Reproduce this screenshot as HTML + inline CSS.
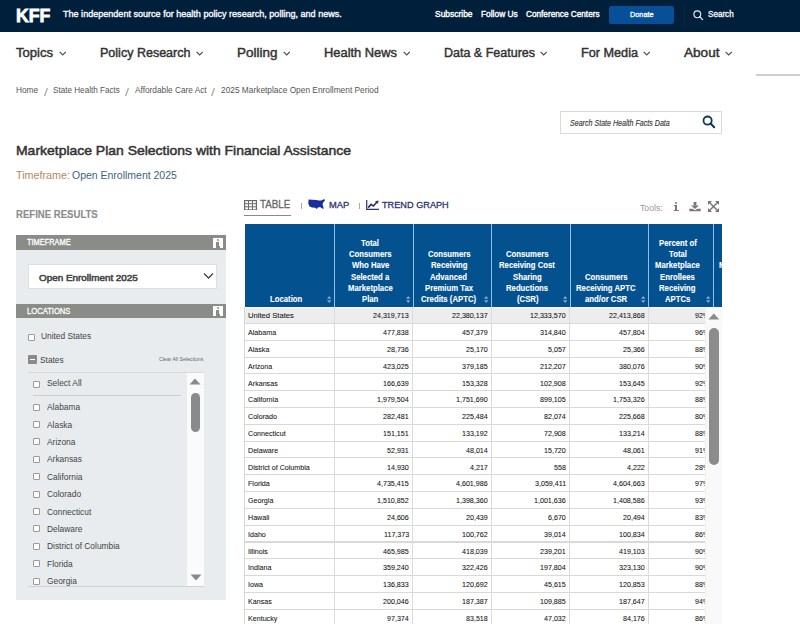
<!DOCTYPE html>
<html><head><meta charset="utf-8"><style>
html,body{margin:0;padding:0;width:800px;height:624px;overflow:hidden;background:#fff;font-family:"Liberation Sans",sans-serif;}
body{position:relative;}
</style></head><body>
<div style="position:absolute;left:0.00px;top:0.00px;width:800.00px;height:31.60px;background:#001f3a;"></div>
<div style="position:absolute;left:609.00px;top:6.00px;width:65.40px;height:18.00px;background:#074f96;border-radius:2.5px"></div>
<div style="position:absolute;left:684.00px;top:4.00px;width:1.00px;height:22.00px;background:#14263c;"></div>
<svg style="position:absolute;left:693.3px;top:9.6px" width="11" height="11" viewBox="0 0 11 11"><circle cx="4.3" cy="4.3" r="3.4" fill="none" stroke="#e6ecf4" stroke-width="1.15"/><line x1="6.8" y1="6.8" x2="9.6" y2="9.6" stroke="#e6ecf4" stroke-width="1.3" stroke-linecap="round"/></svg>
<svg style="position:absolute;left:59.2px;top:51.4px" width="7.4" height="5" viewBox="0 0 7.4 5"><polyline points="0.6,0.8 3.7,3.9 6.8,0.8" fill="none" stroke="#4a4a4a" stroke-width="1.15"/></svg>
<svg style="position:absolute;left:196.2px;top:51.4px" width="7.4" height="5" viewBox="0 0 7.4 5"><polyline points="0.6,0.8 3.7,3.9 6.8,0.8" fill="none" stroke="#4a4a4a" stroke-width="1.15"/></svg>
<svg style="position:absolute;left:282.9px;top:51.4px" width="7.4" height="5" viewBox="0 0 7.4 5"><polyline points="0.6,0.8 3.7,3.9 6.8,0.8" fill="none" stroke="#4a4a4a" stroke-width="1.15"/></svg>
<svg style="position:absolute;left:402.9px;top:51.4px" width="7.4" height="5" viewBox="0 0 7.4 5"><polyline points="0.6,0.8 3.7,3.9 6.8,0.8" fill="none" stroke="#4a4a4a" stroke-width="1.15"/></svg>
<svg style="position:absolute;left:540.2px;top:51.4px" width="7.4" height="5" viewBox="0 0 7.4 5"><polyline points="0.6,0.8 3.7,3.9 6.8,0.8" fill="none" stroke="#4a4a4a" stroke-width="1.15"/></svg>
<svg style="position:absolute;left:643.4px;top:51.4px" width="7.4" height="5" viewBox="0 0 7.4 5"><polyline points="0.6,0.8 3.7,3.9 6.8,0.8" fill="none" stroke="#4a4a4a" stroke-width="1.15"/></svg>
<svg style="position:absolute;left:725.0px;top:51.4px" width="7.4" height="5" viewBox="0 0 7.4 5"><polyline points="0.6,0.8 3.7,3.9 6.8,0.8" fill="none" stroke="#4a4a4a" stroke-width="1.15"/></svg>
<div style="position:absolute;left:756.00px;top:74.00px;width:44.00px;height:2.00px;background:#cfcfcf;"></div>
<div style="position:absolute;left:559.70px;top:111.20px;width:162.30px;height:22.40px;background:#fff;box-sizing:border-box;border:1px solid #d9dcdf"></div>
<svg style="position:absolute;left:702px;top:115px" width="14" height="14" viewBox="0 0 14 14"><circle cx="5.6" cy="5.6" r="4.1" fill="none" stroke="#0f3a4f" stroke-width="1.8"/><line x1="8.6" y1="8.6" x2="12.2" y2="12.2" stroke="#0f3a4f" stroke-width="2.1" stroke-linecap="round"/></svg>
<div style="position:absolute;left:16.30px;top:235.00px;width:209.30px;height:15.00px;background:#898c87;"></div>
<div style="position:absolute;left:16.30px;top:250.00px;width:209.30px;height:53.50px;background:#e9ecef;"></div>
<div style="position:absolute;left:28.30px;top:264.00px;width:189.00px;height:24.50px;background:#fff;box-sizing:border-box;border:1px solid #dde0e3"></div>
<svg style="position:absolute;left:203px;top:272px" width="11" height="8" viewBox="0 0 11 8"><polyline points="1,1.5 5.5,6 10,1.5" fill="none" stroke="#444" stroke-width="1.3"/></svg>
<div style="position:absolute;left:16.30px;top:303.50px;width:209.30px;height:14.50px;background:#898c87;"></div>
<div style="position:absolute;left:16.30px;top:318.00px;width:209.30px;height:282.00px;background:#e9ecef;"></div>
<div style="position:absolute;left:27.9px;top:333.6px;width:7px;height:7px;box-sizing:border-box;border:1px solid #9a9a9a;background:#fff;border-radius:1px"></div>
<div style="position:absolute;left:27.90px;top:355.00px;width:9.10px;height:9.00px;background:#8a8a8a;border-radius:1px"></div>
<div style="position:absolute;left:29.50px;top:358.80px;width:5.90px;height:1.60px;background:#fff;"></div>
<div style="position:absolute;left:27.90px;top:372.00px;width:176.10px;height:214.50px;background:#e9ecef;box-sizing:border-box;border-top:1px solid #d5d9dc;border-bottom:1.5px solid #cfd3d6"></div>
<div style="position:absolute;left:186.50px;top:373.00px;width:17.50px;height:212.50px;background:#fafbfb;"></div>
<svg style="position:absolute;left:189px;top:378px" width="12" height="7" viewBox="0 0 12 7"><polygon points="0.5,6.5 6,0.5 11.5,6.5" fill="#8a8a8a"/></svg>
<svg style="position:absolute;left:189.5px;top:574px" width="12" height="7" viewBox="0 0 12 7"><polygon points="0.5,0.5 6,6.5 11.5,0.5" fill="#8a8a8a"/></svg>
<div style="position:absolute;left:190.50px;top:392.80px;width:9.30px;height:39.70px;background:#8a8a8a;border-radius:5px"></div>
<div style="position:absolute;left:33.4px;top:380.6px;width:7px;height:7px;box-sizing:border-box;border:1px solid #9a9a9a;background:#fff;border-radius:1px"></div>
<div style="position:absolute;left:32.50px;top:395.00px;width:148.00px;height:1.00px;background:#c9cdd0;"></div>
<div style="position:absolute;left:33.4px;top:403.5px;width:7px;height:7px;box-sizing:border-box;border:1px solid #9a9a9a;background:#fff;border-radius:1px"></div>
<div style="position:absolute;left:33.4px;top:420.9px;width:7px;height:7px;box-sizing:border-box;border:1px solid #9a9a9a;background:#fff;border-radius:1px"></div>
<div style="position:absolute;left:33.4px;top:438.3px;width:7px;height:7px;box-sizing:border-box;border:1px solid #9a9a9a;background:#fff;border-radius:1px"></div>
<div style="position:absolute;left:33.4px;top:455.7px;width:7px;height:7px;box-sizing:border-box;border:1px solid #9a9a9a;background:#fff;border-radius:1px"></div>
<div style="position:absolute;left:33.4px;top:473.1px;width:7px;height:7px;box-sizing:border-box;border:1px solid #9a9a9a;background:#fff;border-radius:1px"></div>
<div style="position:absolute;left:33.4px;top:490.5px;width:7px;height:7px;box-sizing:border-box;border:1px solid #9a9a9a;background:#fff;border-radius:1px"></div>
<div style="position:absolute;left:33.4px;top:507.9px;width:7px;height:7px;box-sizing:border-box;border:1px solid #9a9a9a;background:#fff;border-radius:1px"></div>
<div style="position:absolute;left:33.4px;top:525.3px;width:7px;height:7px;box-sizing:border-box;border:1px solid #9a9a9a;background:#fff;border-radius:1px"></div>
<div style="position:absolute;left:33.4px;top:542.7px;width:7px;height:7px;box-sizing:border-box;border:1px solid #9a9a9a;background:#fff;border-radius:1px"></div>
<div style="position:absolute;left:33.4px;top:560.1px;width:7px;height:7px;box-sizing:border-box;border:1px solid #9a9a9a;background:#fff;border-radius:1px"></div>
<div style="position:absolute;left:33.4px;top:577.5px;width:7px;height:7px;box-sizing:border-box;border:1px solid #9a9a9a;background:#fff;border-radius:1px"></div>
<svg style="position:absolute;left:244px;top:199.5px" width="13" height="10.5" viewBox="0 0 13 10.5"><rect x="0.6" y="0.6" width="11.8" height="9.3" fill="none" stroke="#6b6b6b" stroke-width="1.2"/><line x1="0.6" y1="3.7" x2="12.4" y2="3.7" stroke="#6b6b6b" stroke-width="1"/><line x1="0.6" y1="6.8" x2="12.4" y2="6.8" stroke="#6b6b6b" stroke-width="1"/><line x1="4.5" y1="0.6" x2="4.5" y2="9.9" stroke="#6b6b6b" stroke-width="1"/><line x1="8.5" y1="0.6" x2="8.5" y2="9.9" stroke="#6b6b6b" stroke-width="1"/></svg>
<div style="position:absolute;left:244.00px;top:215.00px;width:46.50px;height:1.30px;background:#8a8a8a;"></div>
<div style="position:absolute;left:301.20px;top:203.00px;width:0.90px;height:6.00px;background:#aaa;"></div>
<svg style="position:absolute;left:308.2px;top:199px" width="17" height="10" viewBox="0 0 17 10"><path d="M0.6,0.6 L8,1 L11,1.6 L13.2,1.6 L16.3,0 L16.9,1.4 L15,3.8 L14.6,5.6 L15.8,9.8 L14.2,9.6 L12.6,8.2 L10.2,8.3 L8.8,10 L7.2,8.8 L4.2,8.6 L1.6,7.6 L0.3,4.8 Z" fill="#1b2d9a"/></svg>
<div style="position:absolute;left:358.60px;top:203.00px;width:0.90px;height:6.00px;background:#aaa;"></div>
<svg style="position:absolute;left:366px;top:200px" width="13" height="10" viewBox="0 0 13 10"><polyline points="0.7,0 0.7,9.3 13,9.3" fill="none" stroke="#2d336e" stroke-width="1.2"/><polyline points="2.2,7.6 5,4.4 7.4,6 11,2" fill="none" stroke="#2d336e" stroke-width="1.7"/><polygon points="9,1.2 12.6,0.4 12,3.8" fill="#2d336e"/></svg>
<div style="position:absolute;left:674.8px;top:202px;width:2.6px;height:2.4px;background:#777;border-radius:1px"></div><div style="position:absolute;left:674.8px;top:205.2px;width:2.6px;height:5.6px;background:#777"></div><div style="position:absolute;left:673.6px;top:209.6px;width:5px;height:1.6px;background:#777"></div><div style="position:absolute;left:673.8px;top:205.2px;width:1.5px;height:1.2px;background:#777"></div>
<svg style="position:absolute;left:689px;top:201.5px" width="12" height="10" viewBox="0 0 12 10"><rect x="4.6" y="0" width="2.8" height="3.6" fill="#777"/><polygon points="2,3.4 10,3.4 6,7" fill="#777"/><path d="M0.3,6.8 L3.5,6.8 L6,8.2 L8.5,6.8 L11.7,6.8 L11.7,9.3 L0.3,9.3 Z" fill="#777"/></svg>
<svg style="position:absolute;left:708px;top:201px" width="11" height="11" viewBox="0 0 11 11"><g stroke="#777" stroke-width="1.4" fill="none"><line x1="1.5" y1="1.5" x2="9.5" y2="9.5"/><line x1="9.5" y1="1.5" x2="1.5" y2="9.5"/></g><g fill="#777"><polygon points="0,0 4,0 0,4"/><polygon points="11,0 7,0 11,4"/><polygon points="0,11 4,11 0,7"/><polygon points="11,11 7,11 11,7"/></g></svg>
<div style="position:absolute;left:244.50px;top:223.60px;width:477.50px;height:83.20px;background:#04518f;"></div>
<div style="position:absolute;left:334.00px;top:223.60px;width:1.10px;height:83.20px;background:#8ec1ec;"></div>
<div style="position:absolute;left:412.50px;top:223.60px;width:1.10px;height:83.20px;background:#8ec1ec;"></div>
<div style="position:absolute;left:491.10px;top:223.60px;width:1.10px;height:83.20px;background:#8ec1ec;"></div>
<div style="position:absolute;left:569.50px;top:223.60px;width:1.10px;height:83.20px;background:#8ec1ec;"></div>
<div style="position:absolute;left:648.10px;top:223.60px;width:1.10px;height:83.20px;background:#8ec1ec;"></div>
<div style="position:absolute;left:713.10px;top:223.60px;width:1.10px;height:83.20px;background:#8ec1ec;"></div>
<svg style="position:absolute;left:327.1px;top:296.2px" width="4.4" height="7" viewBox="0 0 4.4 6.6" preserveAspectRatio="none"><polygon points="0,2.7 2.2,0 4.4,2.7" fill="#86a9cc"/><polygon points="0,3.9 2.2,6.6 4.4,3.9" fill="#86a9cc"/></svg>
<svg style="position:absolute;left:405.6px;top:296.2px" width="4.4" height="7" viewBox="0 0 4.4 6.6" preserveAspectRatio="none"><polygon points="0,2.7 2.2,0 4.4,2.7" fill="#86a9cc"/><polygon points="0,3.9 2.2,6.6 4.4,3.9" fill="#86a9cc"/></svg>
<svg style="position:absolute;left:484.2px;top:296.2px" width="4.4" height="7" viewBox="0 0 4.4 6.6" preserveAspectRatio="none"><polygon points="0,2.7 2.2,0 4.4,2.7" fill="#86a9cc"/><polygon points="0,3.9 2.2,6.6 4.4,3.9" fill="#86a9cc"/></svg>
<svg style="position:absolute;left:562.6px;top:296.2px" width="4.4" height="7" viewBox="0 0 4.4 6.6" preserveAspectRatio="none"><polygon points="0,2.7 2.2,0 4.4,2.7" fill="#86a9cc"/><polygon points="0,3.9 2.2,6.6 4.4,3.9" fill="#86a9cc"/></svg>
<svg style="position:absolute;left:641.2px;top:296.2px" width="4.4" height="7" viewBox="0 0 4.4 6.6" preserveAspectRatio="none"><polygon points="0,2.7 2.2,0 4.4,2.7" fill="#86a9cc"/><polygon points="0,3.9 2.2,6.6 4.4,3.9" fill="#86a9cc"/></svg>
<svg style="position:absolute;left:706.2px;top:296.2px" width="4.4" height="7" viewBox="0 0 4.4 6.6" preserveAspectRatio="none"><polygon points="0,2.7 2.2,0 4.4,2.7" fill="#86a9cc"/><polygon points="0,3.9 2.2,6.6 4.4,3.9" fill="#86a9cc"/></svg>
<div style="position:absolute;left:722.00px;top:223.60px;width:78.00px;height:83.20px;background:#fff;z-index:5"></div>
<div style="position:absolute;left:244.50px;top:306.80px;width:460.50px;height:317.20px;background:#fff;"></div>
<div style="position:absolute;left:244.50px;top:306.80px;width:460.50px;height:16.60px;background:#ededed;"></div>
<div style="position:absolute;left:244.50px;top:306.80px;width:460.50px;height:1.40px;background:#fbfbfb;"></div>
<div style="position:absolute;left:244.50px;top:322.90px;width:460.50px;height:1.10px;background:#d9d9d9;"></div>
<div style="position:absolute;left:244.50px;top:339.71px;width:460.50px;height:1.10px;background:#d9d9d9;"></div>
<div style="position:absolute;left:244.50px;top:356.52px;width:460.50px;height:1.10px;background:#d9d9d9;"></div>
<div style="position:absolute;left:244.50px;top:373.33px;width:460.50px;height:1.10px;background:#d9d9d9;"></div>
<div style="position:absolute;left:244.50px;top:390.14px;width:460.50px;height:1.10px;background:#d9d9d9;"></div>
<div style="position:absolute;left:244.50px;top:406.95px;width:460.50px;height:1.10px;background:#d9d9d9;"></div>
<div style="position:absolute;left:244.50px;top:423.76px;width:460.50px;height:1.10px;background:#d9d9d9;"></div>
<div style="position:absolute;left:244.50px;top:440.57px;width:460.50px;height:1.10px;background:#d9d9d9;"></div>
<div style="position:absolute;left:244.50px;top:457.38px;width:460.50px;height:1.10px;background:#d9d9d9;"></div>
<div style="position:absolute;left:244.50px;top:474.19px;width:460.50px;height:1.10px;background:#d9d9d9;"></div>
<div style="position:absolute;left:244.50px;top:491.00px;width:460.50px;height:1.10px;background:#d9d9d9;"></div>
<div style="position:absolute;left:244.50px;top:507.81px;width:460.50px;height:1.10px;background:#d9d9d9;"></div>
<div style="position:absolute;left:244.50px;top:524.62px;width:460.50px;height:1.10px;background:#d9d9d9;"></div>
<div style="position:absolute;left:244.50px;top:541.43px;width:460.50px;height:1.10px;background:#d9d9d9;"></div>
<div style="position:absolute;left:244.50px;top:558.24px;width:460.50px;height:1.10px;background:#d9d9d9;"></div>
<div style="position:absolute;left:244.50px;top:575.05px;width:460.50px;height:1.10px;background:#d9d9d9;"></div>
<div style="position:absolute;left:244.50px;top:591.86px;width:460.50px;height:1.10px;background:#d9d9d9;"></div>
<div style="position:absolute;left:244.50px;top:608.67px;width:460.50px;height:1.10px;background:#d9d9d9;"></div>
<div style="position:absolute;left:244.50px;top:625.48px;width:460.50px;height:1.10px;background:#d9d9d9;"></div>
<div style="position:absolute;left:244.20px;top:306.80px;width:1.00px;height:317.20px;background:#d6d6d6;"></div>
<div style="position:absolute;left:333.50px;top:306.80px;width:1.10px;height:317.20px;background:#dcdcdc;"></div>
<div style="position:absolute;left:412.00px;top:306.80px;width:1.10px;height:317.20px;background:#dcdcdc;"></div>
<div style="position:absolute;left:490.60px;top:306.80px;width:1.10px;height:317.20px;background:#dcdcdc;"></div>
<div style="position:absolute;left:569.00px;top:306.80px;width:1.10px;height:317.20px;background:#dcdcdc;"></div>
<div style="position:absolute;left:647.60px;top:306.80px;width:1.10px;height:317.20px;background:#dcdcdc;"></div>
<div style="position:absolute;left:705.00px;top:306.80px;width:17.00px;height:317.20px;background:#f9f9f9;z-index:5"></div>
<div style="position:absolute;left:705.00px;top:306.80px;width:0.60px;height:317.20px;background:#efefef;z-index:5"></div>
<svg style="position:absolute;left:708px;top:313px;z-index:6" width="12" height="7" viewBox="0 0 12 7"><polygon points="0.3,6.6 5.8,0.4 11.3,6.6" fill="#8c8c8c"/></svg>
<div style="position:absolute;left:709.20px;top:327.60px;width:9.40px;height:137.00px;background:#8c8c8c;z-index:6;border-radius:5px"></div>
<div style="position:absolute;left:15.59px;top:15.50px;line-height:0;white-space:nowrap;font-family:'Liberation Sans';font-size:18.00px;font-weight:bold;font-style:normal;color:#fff;transform:scaleX(0.9803);transform-origin:0 0;-webkit-text-stroke:0.8px #fff;">KFF</div>
<div style="position:absolute;left:62.64px;top:14.30px;line-height:0;white-space:nowrap;font-family:'Liberation Sans';font-size:9.43px;font-weight:normal;font-style:normal;color:#f4f6fa;transform:scaleX(0.9608);transform-origin:0 0;-webkit-text-stroke:0.4px #f4f6fa;">The independent source for health policy research, polling, and news.</div>
<div style="position:absolute;left:434.86px;top:14.30px;line-height:0;white-space:nowrap;font-family:'Liberation Sans';font-size:9.43px;font-weight:normal;font-style:normal;color:#fff;transform:scaleX(0.8959);transform-origin:0 0;-webkit-text-stroke:0.4px #fff;">Subscribe</div>
<div style="position:absolute;left:480.87px;top:14.30px;line-height:0;white-space:nowrap;font-family:'Liberation Sans';font-size:9.43px;font-weight:normal;font-style:normal;color:#fff;transform:scaleX(0.8880);transform-origin:0 0;-webkit-text-stroke:0.4px #fff;">Follow Us</div>
<div style="position:absolute;left:526.07px;top:14.30px;line-height:0;white-space:nowrap;font-family:'Liberation Sans';font-size:9.43px;font-weight:normal;font-style:normal;color:#fff;transform:scaleX(0.8726);transform-origin:0 0;-webkit-text-stroke:0.4px #fff;">Conference Centers</div>
<div style="position:absolute;left:630.31px;top:14.70px;line-height:0;white-space:nowrap;font-family:'Liberation Sans';font-size:7.71px;font-weight:normal;font-style:normal;color:#eef6ff;transform:scaleX(0.9494);transform-origin:0 0;-webkit-text-stroke:0.35px #eef6ff;">Donate</div>
<div style="position:absolute;left:707.68px;top:14.40px;line-height:0;white-space:nowrap;font-family:'Liberation Sans';font-size:8.57px;font-weight:normal;font-style:normal;color:#f0f3f8;transform:scaleX(0.9450);transform-origin:0 0;-webkit-text-stroke:0.35px #f0f3f8;">Search</div>
<div style="position:absolute;left:16.48px;top:53.15px;line-height:0;white-space:nowrap;font-family:'Liberation Sans';font-size:12.71px;font-weight:normal;font-style:normal;color:#333333;transform:scaleX(1.0286);transform-origin:0 0;-webkit-text-stroke:0.45px #333333;">Topics</div>
<div style="position:absolute;left:100.00px;top:53.15px;line-height:0;white-space:nowrap;font-family:'Liberation Sans';font-size:12.71px;font-weight:normal;font-style:normal;color:#333333;transform:scaleX(0.9859);transform-origin:0 0;-webkit-text-stroke:0.45px #333333;">Policy Research</div>
<div style="position:absolute;left:236.86px;top:53.15px;line-height:0;white-space:nowrap;font-family:'Liberation Sans';font-size:12.71px;font-weight:normal;font-style:normal;color:#333333;transform:scaleX(1.0586);transform-origin:0 0;-webkit-text-stroke:0.45px #333333;">Polling</div>
<div style="position:absolute;left:324.18px;top:53.15px;line-height:0;white-space:nowrap;font-family:'Liberation Sans';font-size:12.71px;font-weight:normal;font-style:normal;color:#333333;transform:scaleX(1.0141);transform-origin:0 0;-webkit-text-stroke:0.45px #333333;">Health News</div>
<div style="position:absolute;left:443.50px;top:53.15px;line-height:0;white-space:nowrap;font-family:'Liberation Sans';font-size:12.71px;font-weight:normal;font-style:normal;color:#333333;transform:scaleX(0.9838);transform-origin:0 0;-webkit-text-stroke:0.45px #333333;">Data &amp; Features</div>
<div style="position:absolute;left:580.69px;top:53.15px;line-height:0;white-space:nowrap;font-family:'Liberation Sans';font-size:12.71px;font-weight:normal;font-style:normal;color:#333333;transform:scaleX(0.9970);transform-origin:0 0;-webkit-text-stroke:0.45px #333333;">For Media</div>
<div style="position:absolute;left:683.86px;top:53.15px;line-height:0;white-space:nowrap;font-family:'Liberation Sans';font-size:12.71px;font-weight:normal;font-style:normal;color:#333333;transform:scaleX(1.0688);transform-origin:0 0;-webkit-text-stroke:0.45px #333333;">About</div>
<div style="position:absolute;left:16.17px;top:90.30px;line-height:0;white-space:nowrap;font-family:'Liberation Sans';font-size:8.86px;font-weight:normal;font-style:normal;color:#555;transform:scaleX(0.9395);transform-origin:0 0;">Home</div>
<div style="position:absolute;left:43.63px;top:91.50px;line-height:0;white-space:nowrap;font-family:'Liberation Sans';font-size:10.57px;font-weight:normal;font-style:normal;color:#9a9a9a;transform:scaleX(1.3386);transform-origin:0 0;">/</div>
<div style="position:absolute;left:53.42px;top:90.30px;line-height:0;white-space:nowrap;font-family:'Liberation Sans';font-size:8.86px;font-weight:normal;font-style:normal;color:#555;transform:scaleX(0.9196);transform-origin:0 0;">State Health Facts</div>
<div style="position:absolute;left:125.23px;top:91.50px;line-height:0;white-space:nowrap;font-family:'Liberation Sans';font-size:10.57px;font-weight:normal;font-style:normal;color:#9a9a9a;transform:scaleX(1.3386);transform-origin:0 0;">/</div>
<div style="position:absolute;left:134.67px;top:90.30px;line-height:0;white-space:nowrap;font-family:'Liberation Sans';font-size:8.86px;font-weight:normal;font-style:normal;color:#555;transform:scaleX(0.9364);transform-origin:0 0;">Affordable Care Act</div>
<div style="position:absolute;left:211.43px;top:91.50px;line-height:0;white-space:nowrap;font-family:'Liberation Sans';font-size:10.57px;font-weight:normal;font-style:normal;color:#9a9a9a;transform:scaleX(1.3386);transform-origin:0 0;">/</div>
<div style="position:absolute;left:220.67px;top:90.30px;line-height:0;white-space:nowrap;font-family:'Liberation Sans';font-size:8.86px;font-weight:normal;font-style:normal;color:#555;transform:scaleX(0.9432);transform-origin:0 0;">2025 Marketplace Open Enrollment Period</div>
<div style="position:absolute;left:569.72px;top:122.60px;line-height:0;white-space:nowrap;font-family:'Liberation Sans';font-size:8.29px;font-weight:normal;font-style:italic;color:#3a3a3a;transform:scaleX(0.8565);transform-origin:0 0;-webkit-text-stroke:0.15px #3a3a3a;">Search State Health Facts Data</div>
<div style="position:absolute;left:15.94px;top:150.50px;line-height:0;white-space:nowrap;font-family:'Liberation Sans';font-size:13.43px;font-weight:normal;font-style:normal;color:#333;transform:scaleX(1.0394);transform-origin:0 0;-webkit-text-stroke:0.5px #333;">Marketplace Plan Selections with Financial Assistance</div>
<div style="position:absolute;left:16.07px;top:175.45px;line-height:0;white-space:nowrap;font-family:'Liberation Sans';font-size:11.00px;font-weight:normal;font-style:normal;color:#b8885c;transform:scaleX(0.9772);transform-origin:0 0;">Timeframe:</div>
<div style="position:absolute;left:71.58px;top:175.45px;line-height:0;white-space:nowrap;font-family:'Liberation Sans';font-size:11.00px;font-weight:normal;font-style:normal;color:#3a6583;transform:scaleX(0.9524);transform-origin:0 0;">Open Enrollment 2025</div>
<div style="position:absolute;left:16.12px;top:213.50px;line-height:0;white-space:nowrap;font-family:'Liberation Sans';font-size:10.57px;font-weight:bold;font-style:normal;color:#8c8c8c;transform:scaleX(0.9066);transform-origin:0 0;-webkit-text-stroke:0.15px #8c8c8c;">REFINE RESULTS</div>
<div style="position:absolute;left:27.40px;top:242.20px;line-height:0;white-space:nowrap;font-family:'Liberation Sans';font-size:8.57px;font-weight:normal;font-style:normal;color:#fff;transform:scaleX(0.8646);transform-origin:0 0;-webkit-text-stroke:0.3px #fff;">TIMEFRAME</div>
<div style="position:absolute;left:38.85px;top:277.65px;line-height:0;white-space:nowrap;font-family:'Liberation Sans';font-size:9.57px;font-weight:normal;font-style:normal;color:#444;transform:scaleX(1.0330);transform-origin:0 0;-webkit-text-stroke:0.55px #444;">Open Enrollment 2025</div>
<div style="position:absolute;left:27.40px;top:310.70px;line-height:0;white-space:nowrap;font-family:'Liberation Sans';font-size:8.57px;font-weight:normal;font-style:normal;color:#fff;transform:scaleX(0.8885);transform-origin:0 0;-webkit-text-stroke:0.3px #fff;">LOCATIONS</div>
<div style="position:absolute;left:41.27px;top:336.30px;line-height:0;white-space:nowrap;font-family:'Liberation Sans';font-size:8.86px;font-weight:normal;font-style:normal;color:#444;transform:scaleX(0.9430);transform-origin:0 0;">United States</div>
<div style="position:absolute;left:39.67px;top:360.20px;line-height:0;white-space:nowrap;font-family:'Liberation Sans';font-size:8.57px;font-weight:normal;font-style:normal;color:#444;transform:scaleX(0.9748);transform-origin:0 0;">States</div>
<div style="position:absolute;left:159.49px;top:359.40px;line-height:0;white-space:nowrap;font-family:'Liberation Sans';font-size:6.00px;font-weight:normal;font-style:normal;color:#666;transform:scaleX(0.8570);transform-origin:0 0;">Clear All Selections</div>
<div style="position:absolute;left:46.66px;top:383.20px;line-height:0;white-space:nowrap;font-family:'Liberation Sans';font-size:8.57px;font-weight:normal;font-style:normal;color:#444;transform:scaleX(0.9841);transform-origin:0 0;">Select All</div>
<div style="position:absolute;left:46.66px;top:407.20px;line-height:0;white-space:nowrap;font-family:'Liberation Sans';font-size:8.57px;font-weight:normal;font-style:normal;color:#444;transform:scaleX(0.9800);transform-origin:0 0;">Alabama</div>
<div style="position:absolute;left:46.66px;top:424.60px;line-height:0;white-space:nowrap;font-family:'Liberation Sans';font-size:8.57px;font-weight:normal;font-style:normal;color:#444;transform:scaleX(0.9800);transform-origin:0 0;">Alaska</div>
<div style="position:absolute;left:46.66px;top:442.00px;line-height:0;white-space:nowrap;font-family:'Liberation Sans';font-size:8.57px;font-weight:normal;font-style:normal;color:#444;transform:scaleX(0.9800);transform-origin:0 0;">Arizona</div>
<div style="position:absolute;left:46.66px;top:459.40px;line-height:0;white-space:nowrap;font-family:'Liberation Sans';font-size:8.57px;font-weight:normal;font-style:normal;color:#444;transform:scaleX(0.9800);transform-origin:0 0;">Arkansas</div>
<div style="position:absolute;left:46.66px;top:476.80px;line-height:0;white-space:nowrap;font-family:'Liberation Sans';font-size:8.57px;font-weight:normal;font-style:normal;color:#444;transform:scaleX(0.9800);transform-origin:0 0;">California</div>
<div style="position:absolute;left:46.66px;top:494.20px;line-height:0;white-space:nowrap;font-family:'Liberation Sans';font-size:8.57px;font-weight:normal;font-style:normal;color:#444;transform:scaleX(0.9800);transform-origin:0 0;">Colorado</div>
<div style="position:absolute;left:46.66px;top:511.60px;line-height:0;white-space:nowrap;font-family:'Liberation Sans';font-size:8.57px;font-weight:normal;font-style:normal;color:#444;transform:scaleX(0.9800);transform-origin:0 0;">Connecticut</div>
<div style="position:absolute;left:46.66px;top:529.00px;line-height:0;white-space:nowrap;font-family:'Liberation Sans';font-size:8.57px;font-weight:normal;font-style:normal;color:#444;transform:scaleX(0.9800);transform-origin:0 0;">Delaware</div>
<div style="position:absolute;left:46.66px;top:546.40px;line-height:0;white-space:nowrap;font-family:'Liberation Sans';font-size:8.57px;font-weight:normal;font-style:normal;color:#444;transform:scaleX(0.9800);transform-origin:0 0;">District of Columbia</div>
<div style="position:absolute;left:46.66px;top:563.80px;line-height:0;white-space:nowrap;font-family:'Liberation Sans';font-size:8.57px;font-weight:normal;font-style:normal;color:#444;transform:scaleX(0.9800);transform-origin:0 0;">Florida</div>
<div style="position:absolute;left:46.66px;top:581.20px;line-height:0;white-space:nowrap;font-family:'Liberation Sans';font-size:8.57px;font-weight:normal;font-style:normal;color:#444;transform:scaleX(0.9800);transform-origin:0 0;">Georgia</div>
<div style="position:absolute;left:260.11px;top:204.80px;line-height:0;white-space:nowrap;font-family:'Liberation Sans';font-size:10.00px;font-weight:normal;font-style:normal;color:#666;transform:scaleX(0.9788);transform-origin:0 0;-webkit-text-stroke:0.3px #666;">TABLE</div>
<div style="position:absolute;left:329.13px;top:204.80px;line-height:0;white-space:nowrap;font-family:'Liberation Sans';font-size:9.71px;font-weight:normal;font-style:normal;color:#2d336e;transform:scaleX(0.9628);transform-origin:0 0;-webkit-text-stroke:0.3px #2d336e;">MAP</div>
<div style="position:absolute;left:382.23px;top:204.80px;line-height:0;white-space:nowrap;font-family:'Liberation Sans';font-size:9.71px;font-weight:normal;font-style:normal;color:#2d336e;transform:scaleX(0.9449);transform-origin:0 0;-webkit-text-stroke:0.3px #2d336e;">TREND GRAPH</div>
<div style="position:absolute;left:639.65px;top:207.75px;line-height:0;white-space:nowrap;font-family:'Liberation Sans';font-size:9.29px;font-weight:normal;font-style:normal;color:#999;transform:scaleX(0.9378);transform-origin:0 0;">Tools:</div>
<div style="position:absolute;left:269.87px;top:298.82px;line-height:0;white-space:nowrap;font-family:'Liberation Sans';font-size:8.80px;font-weight:bold;font-style:normal;color:#fff;transform:scaleX(0.8800);transform-origin:0 0;-webkit-text-stroke:0.1px #fff;">Location</div>
<div style="position:absolute;left:361.29px;top:243.07px;line-height:0;white-space:nowrap;font-family:'Liberation Sans';font-size:8.80px;font-weight:bold;font-style:normal;color:#fff;transform:scaleX(0.8800);transform-origin:0 0;-webkit-text-stroke:0.1px #fff;">Total</div>
<div style="position:absolute;left:348.95px;top:254.22px;line-height:0;white-space:nowrap;font-family:'Liberation Sans';font-size:8.80px;font-weight:bold;font-style:normal;color:#fff;transform:scaleX(0.8800);transform-origin:0 0;-webkit-text-stroke:0.1px #fff;">Consumers</div>
<div style="position:absolute;left:351.54px;top:265.37px;line-height:0;white-space:nowrap;font-family:'Liberation Sans';font-size:8.80px;font-weight:bold;font-style:normal;color:#fff;transform:scaleX(0.8800);transform-origin:0 0;-webkit-text-stroke:0.1px #fff;">Who Have</div>
<div style="position:absolute;left:351.10px;top:276.52px;line-height:0;white-space:nowrap;font-family:'Liberation Sans';font-size:8.80px;font-weight:bold;font-style:normal;color:#fff;transform:scaleX(0.8800);transform-origin:0 0;-webkit-text-stroke:0.1px #fff;">Selected a</div>
<div style="position:absolute;left:347.87px;top:287.67px;line-height:0;white-space:nowrap;font-family:'Liberation Sans';font-size:8.80px;font-weight:bold;font-style:normal;color:#fff;transform:scaleX(0.8800);transform-origin:0 0;-webkit-text-stroke:0.1px #fff;">Marketplace</div>
<div style="position:absolute;left:362.08px;top:298.82px;line-height:0;white-space:nowrap;font-family:'Liberation Sans';font-size:8.80px;font-weight:bold;font-style:normal;color:#fff;transform:scaleX(0.8800);transform-origin:0 0;-webkit-text-stroke:0.1px #fff;">Plan</div>
<div style="position:absolute;left:427.50px;top:254.22px;line-height:0;white-space:nowrap;font-family:'Liberation Sans';font-size:8.80px;font-weight:bold;font-style:normal;color:#fff;transform:scaleX(0.8800);transform-origin:0 0;-webkit-text-stroke:0.1px #fff;">Consumers</div>
<div style="position:absolute;left:430.51px;top:265.37px;line-height:0;white-space:nowrap;font-family:'Liberation Sans';font-size:8.80px;font-weight:bold;font-style:normal;color:#fff;transform:scaleX(0.8800);transform-origin:0 0;-webkit-text-stroke:0.1px #fff;">Receiving</div>
<div style="position:absolute;left:430.30px;top:276.52px;line-height:0;white-space:nowrap;font-family:'Liberation Sans';font-size:8.80px;font-weight:bold;font-style:normal;color:#fff;transform:scaleX(0.8800);transform-origin:0 0;-webkit-text-stroke:0.1px #fff;">Advanced</div>
<div style="position:absolute;left:424.78px;top:287.67px;line-height:0;white-space:nowrap;font-family:'Liberation Sans';font-size:8.80px;font-weight:bold;font-style:normal;color:#fff;transform:scaleX(0.8800);transform-origin:0 0;-webkit-text-stroke:0.1px #fff;">Premium Tax</div>
<div style="position:absolute;left:421.27px;top:298.82px;line-height:0;white-space:nowrap;font-family:'Liberation Sans';font-size:8.80px;font-weight:bold;font-style:normal;color:#fff;transform:scaleX(0.8800);transform-origin:0 0;-webkit-text-stroke:0.1px #fff;">Credits (APTC)</div>
<div style="position:absolute;left:506.00px;top:254.22px;line-height:0;white-space:nowrap;font-family:'Liberation Sans';font-size:8.80px;font-weight:bold;font-style:normal;color:#fff;transform:scaleX(0.8800);transform-origin:0 0;-webkit-text-stroke:0.1px #fff;">Consumers</div>
<div style="position:absolute;left:499.33px;top:265.37px;line-height:0;white-space:nowrap;font-family:'Liberation Sans';font-size:8.80px;font-weight:bold;font-style:normal;color:#fff;transform:scaleX(0.8800);transform-origin:0 0;-webkit-text-stroke:0.1px #fff;">Receiving Cost</div>
<div style="position:absolute;left:512.89px;top:276.52px;line-height:0;white-space:nowrap;font-family:'Liberation Sans';font-size:8.80px;font-weight:bold;font-style:normal;color:#fff;transform:scaleX(0.8800);transform-origin:0 0;-webkit-text-stroke:0.1px #fff;">Sharing</div>
<div style="position:absolute;left:506.22px;top:287.67px;line-height:0;white-space:nowrap;font-family:'Liberation Sans';font-size:8.80px;font-weight:bold;font-style:normal;color:#fff;transform:scaleX(0.8800);transform-origin:0 0;-webkit-text-stroke:0.1px #fff;">Reductions</div>
<div style="position:absolute;left:516.55px;top:298.82px;line-height:0;white-space:nowrap;font-family:'Liberation Sans';font-size:8.80px;font-weight:bold;font-style:normal;color:#fff;transform:scaleX(0.8800);transform-origin:0 0;-webkit-text-stroke:0.1px #fff;">(CSR)</div>
<div style="position:absolute;left:584.50px;top:276.52px;line-height:0;white-space:nowrap;font-family:'Liberation Sans';font-size:8.80px;font-weight:bold;font-style:normal;color:#fff;transform:scaleX(0.8800);transform-origin:0 0;-webkit-text-stroke:0.1px #fff;">Consumers</div>
<div style="position:absolute;left:576.04px;top:287.67px;line-height:0;white-space:nowrap;font-family:'Liberation Sans';font-size:8.80px;font-weight:bold;font-style:normal;color:#fff;transform:scaleX(0.8800);transform-origin:0 0;-webkit-text-stroke:0.1px #fff;">Receiving APTC</div>
<div style="position:absolute;left:584.72px;top:298.82px;line-height:0;white-space:nowrap;font-family:'Liberation Sans';font-size:8.80px;font-weight:bold;font-style:normal;color:#fff;transform:scaleX(0.8800);transform-origin:0 0;-webkit-text-stroke:0.1px #fff;">and/or CSR</div>
<div style="position:absolute;left:658.67px;top:243.07px;line-height:0;white-space:nowrap;font-family:'Liberation Sans';font-size:8.80px;font-weight:bold;font-style:normal;color:#fff;transform:scaleX(0.8800);transform-origin:0 0;-webkit-text-stroke:0.1px #fff;">Percent of</div>
<div style="position:absolute;left:668.63px;top:254.22px;line-height:0;white-space:nowrap;font-family:'Liberation Sans';font-size:8.80px;font-weight:bold;font-style:normal;color:#fff;transform:scaleX(0.8800);transform-origin:0 0;-webkit-text-stroke:0.1px #fff;">Total</div>
<div style="position:absolute;left:655.22px;top:265.37px;line-height:0;white-space:nowrap;font-family:'Liberation Sans';font-size:8.80px;font-weight:bold;font-style:normal;color:#fff;transform:scaleX(0.8800);transform-origin:0 0;-webkit-text-stroke:0.1px #fff;">Marketplace</div>
<div style="position:absolute;left:660.17px;top:276.52px;line-height:0;white-space:nowrap;font-family:'Liberation Sans';font-size:8.80px;font-weight:bold;font-style:normal;color:#fff;transform:scaleX(0.8800);transform-origin:0 0;-webkit-text-stroke:0.1px #fff;">Enrollees</div>
<div style="position:absolute;left:659.31px;top:287.67px;line-height:0;white-space:nowrap;font-family:'Liberation Sans';font-size:8.80px;font-weight:bold;font-style:normal;color:#fff;transform:scaleX(0.8800);transform-origin:0 0;-webkit-text-stroke:0.1px #fff;">Receiving</div>
<div style="position:absolute;left:664.91px;top:298.82px;line-height:0;white-space:nowrap;font-family:'Liberation Sans';font-size:8.80px;font-weight:bold;font-style:normal;color:#fff;transform:scaleX(0.8800);transform-origin:0 0;-webkit-text-stroke:0.1px #fff;">APTCs</div>
<div style="position:absolute;left:719.29px;top:264.72px;line-height:0;white-space:nowrap;font-family:'Liberation Sans';font-size:8.80px;font-weight:bold;font-style:normal;color:#fff;transform:scaleX(0.8800);transform-origin:0 0;-webkit-text-stroke:0.1px #fff;">M</div>
<div style="position:absolute;left:247.69px;top:316.27px;line-height:0;white-space:nowrap;font-family:'Liberation Sans';font-size:7.50px;font-weight:normal;font-style:normal;color:#111;transform:scaleX(1.0200);transform-origin:0 0;-webkit-text-stroke:0.06px #111;">United States</div>
<div style="position:absolute;left:373.42px;top:316.27px;line-height:0;white-space:nowrap;font-family:'Liberation Sans';font-size:7.50px;font-weight:normal;font-style:normal;color:#111;transform:scaleX(0.9500);transform-origin:0 0;-webkit-text-stroke:0.06px #111;">24,319,713</div>
<div style="position:absolute;left:452.02px;top:316.27px;line-height:0;white-space:nowrap;font-family:'Liberation Sans';font-size:7.50px;font-weight:normal;font-style:normal;color:#111;transform:scaleX(0.9500);transform-origin:0 0;-webkit-text-stroke:0.06px #111;">22,380,137</div>
<div style="position:absolute;left:530.42px;top:316.27px;line-height:0;white-space:nowrap;font-family:'Liberation Sans';font-size:7.50px;font-weight:normal;font-style:normal;color:#111;transform:scaleX(0.9500);transform-origin:0 0;-webkit-text-stroke:0.06px #111;">12,333,570</div>
<div style="position:absolute;left:609.02px;top:316.27px;line-height:0;white-space:nowrap;font-family:'Liberation Sans';font-size:7.50px;font-weight:normal;font-style:normal;color:#111;transform:scaleX(0.9500);transform-origin:0 0;-webkit-text-stroke:0.06px #111;">22,413,868</div>
<div style="position:absolute;left:695.42px;top:316.27px;line-height:0;white-space:nowrap;font-family:'Liberation Sans';font-size:7.50px;font-weight:normal;font-style:normal;color:#111;transform:scaleX(0.9500);transform-origin:0 0;-webkit-text-stroke:0.06px #111;">92%</div>
<div style="position:absolute;left:247.72px;top:333.08px;line-height:0;white-space:nowrap;font-family:'Liberation Sans';font-size:7.50px;font-weight:normal;font-style:normal;color:#111;transform:scaleX(0.9500);transform-origin:0 0;-webkit-text-stroke:0.06px #111;">Alabama</div>
<div style="position:absolute;left:383.32px;top:333.08px;line-height:0;white-space:nowrap;font-family:'Liberation Sans';font-size:7.50px;font-weight:normal;font-style:normal;color:#111;transform:scaleX(0.9500);transform-origin:0 0;-webkit-text-stroke:0.06px #111;">477,838</div>
<div style="position:absolute;left:461.92px;top:333.08px;line-height:0;white-space:nowrap;font-family:'Liberation Sans';font-size:7.50px;font-weight:normal;font-style:normal;color:#111;transform:scaleX(0.9500);transform-origin:0 0;-webkit-text-stroke:0.06px #111;">457,379</div>
<div style="position:absolute;left:540.32px;top:333.08px;line-height:0;white-space:nowrap;font-family:'Liberation Sans';font-size:7.50px;font-weight:normal;font-style:normal;color:#111;transform:scaleX(0.9500);transform-origin:0 0;-webkit-text-stroke:0.06px #111;">314,840</div>
<div style="position:absolute;left:618.92px;top:333.08px;line-height:0;white-space:nowrap;font-family:'Liberation Sans';font-size:7.50px;font-weight:normal;font-style:normal;color:#111;transform:scaleX(0.9500);transform-origin:0 0;-webkit-text-stroke:0.06px #111;">457,804</div>
<div style="position:absolute;left:695.42px;top:333.08px;line-height:0;white-space:nowrap;font-family:'Liberation Sans';font-size:7.50px;font-weight:normal;font-style:normal;color:#111;transform:scaleX(0.9500);transform-origin:0 0;-webkit-text-stroke:0.06px #111;">96%</div>
<div style="position:absolute;left:247.72px;top:349.89px;line-height:0;white-space:nowrap;font-family:'Liberation Sans';font-size:7.50px;font-weight:normal;font-style:normal;color:#111;transform:scaleX(0.9500);transform-origin:0 0;-webkit-text-stroke:0.06px #111;">Alaska</div>
<div style="position:absolute;left:387.28px;top:349.89px;line-height:0;white-space:nowrap;font-family:'Liberation Sans';font-size:7.50px;font-weight:normal;font-style:normal;color:#111;transform:scaleX(0.9500);transform-origin:0 0;-webkit-text-stroke:0.06px #111;">28,736</div>
<div style="position:absolute;left:465.88px;top:349.89px;line-height:0;white-space:nowrap;font-family:'Liberation Sans';font-size:7.50px;font-weight:normal;font-style:normal;color:#111;transform:scaleX(0.9500);transform-origin:0 0;-webkit-text-stroke:0.06px #111;">25,170</div>
<div style="position:absolute;left:548.24px;top:349.89px;line-height:0;white-space:nowrap;font-family:'Liberation Sans';font-size:7.50px;font-weight:normal;font-style:normal;color:#111;transform:scaleX(0.9500);transform-origin:0 0;-webkit-text-stroke:0.06px #111;">5,057</div>
<div style="position:absolute;left:622.88px;top:349.89px;line-height:0;white-space:nowrap;font-family:'Liberation Sans';font-size:7.50px;font-weight:normal;font-style:normal;color:#111;transform:scaleX(0.9500);transform-origin:0 0;-webkit-text-stroke:0.06px #111;">25,366</div>
<div style="position:absolute;left:695.42px;top:349.89px;line-height:0;white-space:nowrap;font-family:'Liberation Sans';font-size:7.50px;font-weight:normal;font-style:normal;color:#111;transform:scaleX(0.9500);transform-origin:0 0;-webkit-text-stroke:0.06px #111;">88%</div>
<div style="position:absolute;left:247.72px;top:366.70px;line-height:0;white-space:nowrap;font-family:'Liberation Sans';font-size:7.50px;font-weight:normal;font-style:normal;color:#111;transform:scaleX(0.9500);transform-origin:0 0;-webkit-text-stroke:0.06px #111;">Arizona</div>
<div style="position:absolute;left:383.32px;top:366.70px;line-height:0;white-space:nowrap;font-family:'Liberation Sans';font-size:7.50px;font-weight:normal;font-style:normal;color:#111;transform:scaleX(0.9500);transform-origin:0 0;-webkit-text-stroke:0.06px #111;">423,025</div>
<div style="position:absolute;left:461.92px;top:366.70px;line-height:0;white-space:nowrap;font-family:'Liberation Sans';font-size:7.50px;font-weight:normal;font-style:normal;color:#111;transform:scaleX(0.9500);transform-origin:0 0;-webkit-text-stroke:0.06px #111;">379,185</div>
<div style="position:absolute;left:540.32px;top:366.70px;line-height:0;white-space:nowrap;font-family:'Liberation Sans';font-size:7.50px;font-weight:normal;font-style:normal;color:#111;transform:scaleX(0.9500);transform-origin:0 0;-webkit-text-stroke:0.06px #111;">212,207</div>
<div style="position:absolute;left:618.92px;top:366.70px;line-height:0;white-space:nowrap;font-family:'Liberation Sans';font-size:7.50px;font-weight:normal;font-style:normal;color:#111;transform:scaleX(0.9500);transform-origin:0 0;-webkit-text-stroke:0.06px #111;">380,076</div>
<div style="position:absolute;left:695.42px;top:366.70px;line-height:0;white-space:nowrap;font-family:'Liberation Sans';font-size:7.50px;font-weight:normal;font-style:normal;color:#111;transform:scaleX(0.9500);transform-origin:0 0;-webkit-text-stroke:0.06px #111;">90%</div>
<div style="position:absolute;left:247.72px;top:383.51px;line-height:0;white-space:nowrap;font-family:'Liberation Sans';font-size:7.50px;font-weight:normal;font-style:normal;color:#111;transform:scaleX(0.9500);transform-origin:0 0;-webkit-text-stroke:0.06px #111;">Arkansas</div>
<div style="position:absolute;left:383.32px;top:383.51px;line-height:0;white-space:nowrap;font-family:'Liberation Sans';font-size:7.50px;font-weight:normal;font-style:normal;color:#111;transform:scaleX(0.9500);transform-origin:0 0;-webkit-text-stroke:0.06px #111;">166,639</div>
<div style="position:absolute;left:461.92px;top:383.51px;line-height:0;white-space:nowrap;font-family:'Liberation Sans';font-size:7.50px;font-weight:normal;font-style:normal;color:#111;transform:scaleX(0.9500);transform-origin:0 0;-webkit-text-stroke:0.06px #111;">153,328</div>
<div style="position:absolute;left:540.32px;top:383.51px;line-height:0;white-space:nowrap;font-family:'Liberation Sans';font-size:7.50px;font-weight:normal;font-style:normal;color:#111;transform:scaleX(0.9500);transform-origin:0 0;-webkit-text-stroke:0.06px #111;">102,908</div>
<div style="position:absolute;left:618.92px;top:383.51px;line-height:0;white-space:nowrap;font-family:'Liberation Sans';font-size:7.50px;font-weight:normal;font-style:normal;color:#111;transform:scaleX(0.9500);transform-origin:0 0;-webkit-text-stroke:0.06px #111;">153,645</div>
<div style="position:absolute;left:695.42px;top:383.51px;line-height:0;white-space:nowrap;font-family:'Liberation Sans';font-size:7.50px;font-weight:normal;font-style:normal;color:#111;transform:scaleX(0.9500);transform-origin:0 0;-webkit-text-stroke:0.06px #111;">92%</div>
<div style="position:absolute;left:247.72px;top:400.32px;line-height:0;white-space:nowrap;font-family:'Liberation Sans';font-size:7.50px;font-weight:normal;font-style:normal;color:#111;transform:scaleX(0.9500);transform-origin:0 0;-webkit-text-stroke:0.06px #111;">California</div>
<div style="position:absolute;left:377.38px;top:400.32px;line-height:0;white-space:nowrap;font-family:'Liberation Sans';font-size:7.50px;font-weight:normal;font-style:normal;color:#111;transform:scaleX(0.9500);transform-origin:0 0;-webkit-text-stroke:0.06px #111;">1,979,504</div>
<div style="position:absolute;left:455.98px;top:400.32px;line-height:0;white-space:nowrap;font-family:'Liberation Sans';font-size:7.50px;font-weight:normal;font-style:normal;color:#111;transform:scaleX(0.9500);transform-origin:0 0;-webkit-text-stroke:0.06px #111;">1,751,690</div>
<div style="position:absolute;left:540.32px;top:400.32px;line-height:0;white-space:nowrap;font-family:'Liberation Sans';font-size:7.50px;font-weight:normal;font-style:normal;color:#111;transform:scaleX(0.9500);transform-origin:0 0;-webkit-text-stroke:0.06px #111;">899,105</div>
<div style="position:absolute;left:612.98px;top:400.32px;line-height:0;white-space:nowrap;font-family:'Liberation Sans';font-size:7.50px;font-weight:normal;font-style:normal;color:#111;transform:scaleX(0.9500);transform-origin:0 0;-webkit-text-stroke:0.06px #111;">1,753,326</div>
<div style="position:absolute;left:695.42px;top:400.32px;line-height:0;white-space:nowrap;font-family:'Liberation Sans';font-size:7.50px;font-weight:normal;font-style:normal;color:#111;transform:scaleX(0.9500);transform-origin:0 0;-webkit-text-stroke:0.06px #111;">88%</div>
<div style="position:absolute;left:247.72px;top:417.13px;line-height:0;white-space:nowrap;font-family:'Liberation Sans';font-size:7.50px;font-weight:normal;font-style:normal;color:#111;transform:scaleX(0.9500);transform-origin:0 0;-webkit-text-stroke:0.06px #111;">Colorado</div>
<div style="position:absolute;left:383.32px;top:417.13px;line-height:0;white-space:nowrap;font-family:'Liberation Sans';font-size:7.50px;font-weight:normal;font-style:normal;color:#111;transform:scaleX(0.9500);transform-origin:0 0;-webkit-text-stroke:0.06px #111;">282,481</div>
<div style="position:absolute;left:461.92px;top:417.13px;line-height:0;white-space:nowrap;font-family:'Liberation Sans';font-size:7.50px;font-weight:normal;font-style:normal;color:#111;transform:scaleX(0.9500);transform-origin:0 0;-webkit-text-stroke:0.06px #111;">225,484</div>
<div style="position:absolute;left:544.28px;top:417.13px;line-height:0;white-space:nowrap;font-family:'Liberation Sans';font-size:7.50px;font-weight:normal;font-style:normal;color:#111;transform:scaleX(0.9500);transform-origin:0 0;-webkit-text-stroke:0.06px #111;">82,074</div>
<div style="position:absolute;left:618.92px;top:417.13px;line-height:0;white-space:nowrap;font-family:'Liberation Sans';font-size:7.50px;font-weight:normal;font-style:normal;color:#111;transform:scaleX(0.9500);transform-origin:0 0;-webkit-text-stroke:0.06px #111;">225,668</div>
<div style="position:absolute;left:695.42px;top:417.13px;line-height:0;white-space:nowrap;font-family:'Liberation Sans';font-size:7.50px;font-weight:normal;font-style:normal;color:#111;transform:scaleX(0.9500);transform-origin:0 0;-webkit-text-stroke:0.06px #111;">80%</div>
<div style="position:absolute;left:247.72px;top:433.94px;line-height:0;white-space:nowrap;font-family:'Liberation Sans';font-size:7.50px;font-weight:normal;font-style:normal;color:#111;transform:scaleX(0.9500);transform-origin:0 0;-webkit-text-stroke:0.06px #111;">Connecticut</div>
<div style="position:absolute;left:383.32px;top:433.94px;line-height:0;white-space:nowrap;font-family:'Liberation Sans';font-size:7.50px;font-weight:normal;font-style:normal;color:#111;transform:scaleX(0.9500);transform-origin:0 0;-webkit-text-stroke:0.06px #111;">151,151</div>
<div style="position:absolute;left:461.92px;top:433.94px;line-height:0;white-space:nowrap;font-family:'Liberation Sans';font-size:7.50px;font-weight:normal;font-style:normal;color:#111;transform:scaleX(0.9500);transform-origin:0 0;-webkit-text-stroke:0.06px #111;">133,192</div>
<div style="position:absolute;left:544.28px;top:433.94px;line-height:0;white-space:nowrap;font-family:'Liberation Sans';font-size:7.50px;font-weight:normal;font-style:normal;color:#111;transform:scaleX(0.9500);transform-origin:0 0;-webkit-text-stroke:0.06px #111;">72,908</div>
<div style="position:absolute;left:618.92px;top:433.94px;line-height:0;white-space:nowrap;font-family:'Liberation Sans';font-size:7.50px;font-weight:normal;font-style:normal;color:#111;transform:scaleX(0.9500);transform-origin:0 0;-webkit-text-stroke:0.06px #111;">133,214</div>
<div style="position:absolute;left:695.42px;top:433.94px;line-height:0;white-space:nowrap;font-family:'Liberation Sans';font-size:7.50px;font-weight:normal;font-style:normal;color:#111;transform:scaleX(0.9500);transform-origin:0 0;-webkit-text-stroke:0.06px #111;">88%</div>
<div style="position:absolute;left:247.72px;top:450.75px;line-height:0;white-space:nowrap;font-family:'Liberation Sans';font-size:7.50px;font-weight:normal;font-style:normal;color:#111;transform:scaleX(0.9500);transform-origin:0 0;-webkit-text-stroke:0.06px #111;">Delaware</div>
<div style="position:absolute;left:387.28px;top:450.75px;line-height:0;white-space:nowrap;font-family:'Liberation Sans';font-size:7.50px;font-weight:normal;font-style:normal;color:#111;transform:scaleX(0.9500);transform-origin:0 0;-webkit-text-stroke:0.06px #111;">52,931</div>
<div style="position:absolute;left:465.88px;top:450.75px;line-height:0;white-space:nowrap;font-family:'Liberation Sans';font-size:7.50px;font-weight:normal;font-style:normal;color:#111;transform:scaleX(0.9500);transform-origin:0 0;-webkit-text-stroke:0.06px #111;">48,014</div>
<div style="position:absolute;left:544.28px;top:450.75px;line-height:0;white-space:nowrap;font-family:'Liberation Sans';font-size:7.50px;font-weight:normal;font-style:normal;color:#111;transform:scaleX(0.9500);transform-origin:0 0;-webkit-text-stroke:0.06px #111;">15,720</div>
<div style="position:absolute;left:622.88px;top:450.75px;line-height:0;white-space:nowrap;font-family:'Liberation Sans';font-size:7.50px;font-weight:normal;font-style:normal;color:#111;transform:scaleX(0.9500);transform-origin:0 0;-webkit-text-stroke:0.06px #111;">48,061</div>
<div style="position:absolute;left:695.42px;top:450.75px;line-height:0;white-space:nowrap;font-family:'Liberation Sans';font-size:7.50px;font-weight:normal;font-style:normal;color:#111;transform:scaleX(0.9500);transform-origin:0 0;-webkit-text-stroke:0.06px #111;">91%</div>
<div style="position:absolute;left:247.72px;top:467.56px;line-height:0;white-space:nowrap;font-family:'Liberation Sans';font-size:7.50px;font-weight:normal;font-style:normal;color:#111;transform:scaleX(0.9500);transform-origin:0 0;-webkit-text-stroke:0.06px #111;">District of Columbia</div>
<div style="position:absolute;left:387.28px;top:467.56px;line-height:0;white-space:nowrap;font-family:'Liberation Sans';font-size:7.50px;font-weight:normal;font-style:normal;color:#111;transform:scaleX(0.9500);transform-origin:0 0;-webkit-text-stroke:0.06px #111;">14,930</div>
<div style="position:absolute;left:469.84px;top:467.56px;line-height:0;white-space:nowrap;font-family:'Liberation Sans';font-size:7.50px;font-weight:normal;font-style:normal;color:#111;transform:scaleX(0.9500);transform-origin:0 0;-webkit-text-stroke:0.06px #111;">4,217</div>
<div style="position:absolute;left:554.20px;top:467.56px;line-height:0;white-space:nowrap;font-family:'Liberation Sans';font-size:7.50px;font-weight:normal;font-style:normal;color:#111;transform:scaleX(0.9500);transform-origin:0 0;-webkit-text-stroke:0.06px #111;">558</div>
<div style="position:absolute;left:626.84px;top:467.56px;line-height:0;white-space:nowrap;font-family:'Liberation Sans';font-size:7.50px;font-weight:normal;font-style:normal;color:#111;transform:scaleX(0.9500);transform-origin:0 0;-webkit-text-stroke:0.06px #111;">4,222</div>
<div style="position:absolute;left:695.42px;top:467.56px;line-height:0;white-space:nowrap;font-family:'Liberation Sans';font-size:7.50px;font-weight:normal;font-style:normal;color:#111;transform:scaleX(0.9500);transform-origin:0 0;-webkit-text-stroke:0.06px #111;">28%</div>
<div style="position:absolute;left:247.72px;top:484.38px;line-height:0;white-space:nowrap;font-family:'Liberation Sans';font-size:7.50px;font-weight:normal;font-style:normal;color:#111;transform:scaleX(0.9500);transform-origin:0 0;-webkit-text-stroke:0.06px #111;">Florida</div>
<div style="position:absolute;left:377.38px;top:484.38px;line-height:0;white-space:nowrap;font-family:'Liberation Sans';font-size:7.50px;font-weight:normal;font-style:normal;color:#111;transform:scaleX(0.9500);transform-origin:0 0;-webkit-text-stroke:0.06px #111;">4,735,415</div>
<div style="position:absolute;left:455.98px;top:484.38px;line-height:0;white-space:nowrap;font-family:'Liberation Sans';font-size:7.50px;font-weight:normal;font-style:normal;color:#111;transform:scaleX(0.9500);transform-origin:0 0;-webkit-text-stroke:0.06px #111;">4,601,986</div>
<div style="position:absolute;left:534.91px;top:484.38px;line-height:0;white-space:nowrap;font-family:'Liberation Sans';font-size:7.50px;font-weight:normal;font-style:normal;color:#111;transform:scaleX(0.9500);transform-origin:0 0;-webkit-text-stroke:0.06px #111;">3,059,411</div>
<div style="position:absolute;left:612.98px;top:484.38px;line-height:0;white-space:nowrap;font-family:'Liberation Sans';font-size:7.50px;font-weight:normal;font-style:normal;color:#111;transform:scaleX(0.9500);transform-origin:0 0;-webkit-text-stroke:0.06px #111;">4,604,663</div>
<div style="position:absolute;left:695.42px;top:484.38px;line-height:0;white-space:nowrap;font-family:'Liberation Sans';font-size:7.50px;font-weight:normal;font-style:normal;color:#111;transform:scaleX(0.9500);transform-origin:0 0;-webkit-text-stroke:0.06px #111;">97%</div>
<div style="position:absolute;left:247.72px;top:501.18px;line-height:0;white-space:nowrap;font-family:'Liberation Sans';font-size:7.50px;font-weight:normal;font-style:normal;color:#111;transform:scaleX(0.9500);transform-origin:0 0;-webkit-text-stroke:0.06px #111;">Georgia</div>
<div style="position:absolute;left:377.38px;top:501.18px;line-height:0;white-space:nowrap;font-family:'Liberation Sans';font-size:7.50px;font-weight:normal;font-style:normal;color:#111;transform:scaleX(0.9500);transform-origin:0 0;-webkit-text-stroke:0.06px #111;">1,510,852</div>
<div style="position:absolute;left:455.98px;top:501.18px;line-height:0;white-space:nowrap;font-family:'Liberation Sans';font-size:7.50px;font-weight:normal;font-style:normal;color:#111;transform:scaleX(0.9500);transform-origin:0 0;-webkit-text-stroke:0.06px #111;">1,398,360</div>
<div style="position:absolute;left:534.38px;top:501.18px;line-height:0;white-space:nowrap;font-family:'Liberation Sans';font-size:7.50px;font-weight:normal;font-style:normal;color:#111;transform:scaleX(0.9500);transform-origin:0 0;-webkit-text-stroke:0.06px #111;">1,001,636</div>
<div style="position:absolute;left:612.98px;top:501.18px;line-height:0;white-space:nowrap;font-family:'Liberation Sans';font-size:7.50px;font-weight:normal;font-style:normal;color:#111;transform:scaleX(0.9500);transform-origin:0 0;-webkit-text-stroke:0.06px #111;">1,408,586</div>
<div style="position:absolute;left:695.42px;top:501.18px;line-height:0;white-space:nowrap;font-family:'Liberation Sans';font-size:7.50px;font-weight:normal;font-style:normal;color:#111;transform:scaleX(0.9500);transform-origin:0 0;-webkit-text-stroke:0.06px #111;">93%</div>
<div style="position:absolute;left:247.72px;top:517.99px;line-height:0;white-space:nowrap;font-family:'Liberation Sans';font-size:7.50px;font-weight:normal;font-style:normal;color:#111;transform:scaleX(0.9500);transform-origin:0 0;-webkit-text-stroke:0.06px #111;">Hawaii</div>
<div style="position:absolute;left:387.28px;top:517.99px;line-height:0;white-space:nowrap;font-family:'Liberation Sans';font-size:7.50px;font-weight:normal;font-style:normal;color:#111;transform:scaleX(0.9500);transform-origin:0 0;-webkit-text-stroke:0.06px #111;">24,606</div>
<div style="position:absolute;left:465.88px;top:517.99px;line-height:0;white-space:nowrap;font-family:'Liberation Sans';font-size:7.50px;font-weight:normal;font-style:normal;color:#111;transform:scaleX(0.9500);transform-origin:0 0;-webkit-text-stroke:0.06px #111;">20,439</div>
<div style="position:absolute;left:548.24px;top:517.99px;line-height:0;white-space:nowrap;font-family:'Liberation Sans';font-size:7.50px;font-weight:normal;font-style:normal;color:#111;transform:scaleX(0.9500);transform-origin:0 0;-webkit-text-stroke:0.06px #111;">6,670</div>
<div style="position:absolute;left:622.88px;top:517.99px;line-height:0;white-space:nowrap;font-family:'Liberation Sans';font-size:7.50px;font-weight:normal;font-style:normal;color:#111;transform:scaleX(0.9500);transform-origin:0 0;-webkit-text-stroke:0.06px #111;">20,494</div>
<div style="position:absolute;left:695.42px;top:517.99px;line-height:0;white-space:nowrap;font-family:'Liberation Sans';font-size:7.50px;font-weight:normal;font-style:normal;color:#111;transform:scaleX(0.9500);transform-origin:0 0;-webkit-text-stroke:0.06px #111;">83%</div>
<div style="position:absolute;left:247.72px;top:534.80px;line-height:0;white-space:nowrap;font-family:'Liberation Sans';font-size:7.50px;font-weight:normal;font-style:normal;color:#111;transform:scaleX(0.9500);transform-origin:0 0;-webkit-text-stroke:0.06px #111;">Idaho</div>
<div style="position:absolute;left:383.85px;top:534.80px;line-height:0;white-space:nowrap;font-family:'Liberation Sans';font-size:7.50px;font-weight:normal;font-style:normal;color:#111;transform:scaleX(0.9500);transform-origin:0 0;-webkit-text-stroke:0.06px #111;">117,373</div>
<div style="position:absolute;left:461.92px;top:534.80px;line-height:0;white-space:nowrap;font-family:'Liberation Sans';font-size:7.50px;font-weight:normal;font-style:normal;color:#111;transform:scaleX(0.9500);transform-origin:0 0;-webkit-text-stroke:0.06px #111;">100,762</div>
<div style="position:absolute;left:544.28px;top:534.80px;line-height:0;white-space:nowrap;font-family:'Liberation Sans';font-size:7.50px;font-weight:normal;font-style:normal;color:#111;transform:scaleX(0.9500);transform-origin:0 0;-webkit-text-stroke:0.06px #111;">39,014</div>
<div style="position:absolute;left:618.92px;top:534.80px;line-height:0;white-space:nowrap;font-family:'Liberation Sans';font-size:7.50px;font-weight:normal;font-style:normal;color:#111;transform:scaleX(0.9500);transform-origin:0 0;-webkit-text-stroke:0.06px #111;">100,834</div>
<div style="position:absolute;left:695.42px;top:534.80px;line-height:0;white-space:nowrap;font-family:'Liberation Sans';font-size:7.50px;font-weight:normal;font-style:normal;color:#111;transform:scaleX(0.9500);transform-origin:0 0;-webkit-text-stroke:0.06px #111;">86%</div>
<div style="position:absolute;left:247.72px;top:551.62px;line-height:0;white-space:nowrap;font-family:'Liberation Sans';font-size:7.50px;font-weight:normal;font-style:normal;color:#111;transform:scaleX(0.9500);transform-origin:0 0;-webkit-text-stroke:0.06px #111;">Illinois</div>
<div style="position:absolute;left:383.32px;top:551.62px;line-height:0;white-space:nowrap;font-family:'Liberation Sans';font-size:7.50px;font-weight:normal;font-style:normal;color:#111;transform:scaleX(0.9500);transform-origin:0 0;-webkit-text-stroke:0.06px #111;">465,985</div>
<div style="position:absolute;left:461.92px;top:551.62px;line-height:0;white-space:nowrap;font-family:'Liberation Sans';font-size:7.50px;font-weight:normal;font-style:normal;color:#111;transform:scaleX(0.9500);transform-origin:0 0;-webkit-text-stroke:0.06px #111;">418,039</div>
<div style="position:absolute;left:540.32px;top:551.62px;line-height:0;white-space:nowrap;font-family:'Liberation Sans';font-size:7.50px;font-weight:normal;font-style:normal;color:#111;transform:scaleX(0.9500);transform-origin:0 0;-webkit-text-stroke:0.06px #111;">239,201</div>
<div style="position:absolute;left:618.92px;top:551.62px;line-height:0;white-space:nowrap;font-family:'Liberation Sans';font-size:7.50px;font-weight:normal;font-style:normal;color:#111;transform:scaleX(0.9500);transform-origin:0 0;-webkit-text-stroke:0.06px #111;">419,103</div>
<div style="position:absolute;left:695.42px;top:551.62px;line-height:0;white-space:nowrap;font-family:'Liberation Sans';font-size:7.50px;font-weight:normal;font-style:normal;color:#111;transform:scaleX(0.9500);transform-origin:0 0;-webkit-text-stroke:0.06px #111;">90%</div>
<div style="position:absolute;left:247.72px;top:568.42px;line-height:0;white-space:nowrap;font-family:'Liberation Sans';font-size:7.50px;font-weight:normal;font-style:normal;color:#111;transform:scaleX(0.9500);transform-origin:0 0;-webkit-text-stroke:0.06px #111;">Indiana</div>
<div style="position:absolute;left:383.32px;top:568.42px;line-height:0;white-space:nowrap;font-family:'Liberation Sans';font-size:7.50px;font-weight:normal;font-style:normal;color:#111;transform:scaleX(0.9500);transform-origin:0 0;-webkit-text-stroke:0.06px #111;">359,240</div>
<div style="position:absolute;left:461.92px;top:568.42px;line-height:0;white-space:nowrap;font-family:'Liberation Sans';font-size:7.50px;font-weight:normal;font-style:normal;color:#111;transform:scaleX(0.9500);transform-origin:0 0;-webkit-text-stroke:0.06px #111;">322,426</div>
<div style="position:absolute;left:540.32px;top:568.42px;line-height:0;white-space:nowrap;font-family:'Liberation Sans';font-size:7.50px;font-weight:normal;font-style:normal;color:#111;transform:scaleX(0.9500);transform-origin:0 0;-webkit-text-stroke:0.06px #111;">197,804</div>
<div style="position:absolute;left:618.92px;top:568.42px;line-height:0;white-space:nowrap;font-family:'Liberation Sans';font-size:7.50px;font-weight:normal;font-style:normal;color:#111;transform:scaleX(0.9500);transform-origin:0 0;-webkit-text-stroke:0.06px #111;">323,130</div>
<div style="position:absolute;left:695.42px;top:568.42px;line-height:0;white-space:nowrap;font-family:'Liberation Sans';font-size:7.50px;font-weight:normal;font-style:normal;color:#111;transform:scaleX(0.9500);transform-origin:0 0;-webkit-text-stroke:0.06px #111;">90%</div>
<div style="position:absolute;left:247.72px;top:585.23px;line-height:0;white-space:nowrap;font-family:'Liberation Sans';font-size:7.50px;font-weight:normal;font-style:normal;color:#111;transform:scaleX(0.9500);transform-origin:0 0;-webkit-text-stroke:0.06px #111;">Iowa</div>
<div style="position:absolute;left:383.32px;top:585.23px;line-height:0;white-space:nowrap;font-family:'Liberation Sans';font-size:7.50px;font-weight:normal;font-style:normal;color:#111;transform:scaleX(0.9500);transform-origin:0 0;-webkit-text-stroke:0.06px #111;">136,833</div>
<div style="position:absolute;left:461.92px;top:585.23px;line-height:0;white-space:nowrap;font-family:'Liberation Sans';font-size:7.50px;font-weight:normal;font-style:normal;color:#111;transform:scaleX(0.9500);transform-origin:0 0;-webkit-text-stroke:0.06px #111;">120,692</div>
<div style="position:absolute;left:544.28px;top:585.23px;line-height:0;white-space:nowrap;font-family:'Liberation Sans';font-size:7.50px;font-weight:normal;font-style:normal;color:#111;transform:scaleX(0.9500);transform-origin:0 0;-webkit-text-stroke:0.06px #111;">45,615</div>
<div style="position:absolute;left:618.92px;top:585.23px;line-height:0;white-space:nowrap;font-family:'Liberation Sans';font-size:7.50px;font-weight:normal;font-style:normal;color:#111;transform:scaleX(0.9500);transform-origin:0 0;-webkit-text-stroke:0.06px #111;">120,853</div>
<div style="position:absolute;left:695.42px;top:585.23px;line-height:0;white-space:nowrap;font-family:'Liberation Sans';font-size:7.50px;font-weight:normal;font-style:normal;color:#111;transform:scaleX(0.9500);transform-origin:0 0;-webkit-text-stroke:0.06px #111;">88%</div>
<div style="position:absolute;left:247.72px;top:602.04px;line-height:0;white-space:nowrap;font-family:'Liberation Sans';font-size:7.50px;font-weight:normal;font-style:normal;color:#111;transform:scaleX(0.9500);transform-origin:0 0;-webkit-text-stroke:0.06px #111;">Kansas</div>
<div style="position:absolute;left:383.32px;top:602.04px;line-height:0;white-space:nowrap;font-family:'Liberation Sans';font-size:7.50px;font-weight:normal;font-style:normal;color:#111;transform:scaleX(0.9500);transform-origin:0 0;-webkit-text-stroke:0.06px #111;">200,046</div>
<div style="position:absolute;left:461.92px;top:602.04px;line-height:0;white-space:nowrap;font-family:'Liberation Sans';font-size:7.50px;font-weight:normal;font-style:normal;color:#111;transform:scaleX(0.9500);transform-origin:0 0;-webkit-text-stroke:0.06px #111;">187,387</div>
<div style="position:absolute;left:540.32px;top:602.04px;line-height:0;white-space:nowrap;font-family:'Liberation Sans';font-size:7.50px;font-weight:normal;font-style:normal;color:#111;transform:scaleX(0.9500);transform-origin:0 0;-webkit-text-stroke:0.06px #111;">109,885</div>
<div style="position:absolute;left:618.92px;top:602.04px;line-height:0;white-space:nowrap;font-family:'Liberation Sans';font-size:7.50px;font-weight:normal;font-style:normal;color:#111;transform:scaleX(0.9500);transform-origin:0 0;-webkit-text-stroke:0.06px #111;">187,647</div>
<div style="position:absolute;left:695.42px;top:602.04px;line-height:0;white-space:nowrap;font-family:'Liberation Sans';font-size:7.50px;font-weight:normal;font-style:normal;color:#111;transform:scaleX(0.9500);transform-origin:0 0;-webkit-text-stroke:0.06px #111;">94%</div>
<div style="position:absolute;left:247.72px;top:618.86px;line-height:0;white-space:nowrap;font-family:'Liberation Sans';font-size:7.50px;font-weight:normal;font-style:normal;color:#111;transform:scaleX(0.9500);transform-origin:0 0;-webkit-text-stroke:0.06px #111;">Kentucky</div>
<div style="position:absolute;left:387.28px;top:618.86px;line-height:0;white-space:nowrap;font-family:'Liberation Sans';font-size:7.50px;font-weight:normal;font-style:normal;color:#111;transform:scaleX(0.9500);transform-origin:0 0;-webkit-text-stroke:0.06px #111;">97,374</div>
<div style="position:absolute;left:465.88px;top:618.86px;line-height:0;white-space:nowrap;font-family:'Liberation Sans';font-size:7.50px;font-weight:normal;font-style:normal;color:#111;transform:scaleX(0.9500);transform-origin:0 0;-webkit-text-stroke:0.06px #111;">83,518</div>
<div style="position:absolute;left:544.28px;top:618.86px;line-height:0;white-space:nowrap;font-family:'Liberation Sans';font-size:7.50px;font-weight:normal;font-style:normal;color:#111;transform:scaleX(0.9500);transform-origin:0 0;-webkit-text-stroke:0.06px #111;">47,032</div>
<div style="position:absolute;left:622.88px;top:618.86px;line-height:0;white-space:nowrap;font-family:'Liberation Sans';font-size:7.50px;font-weight:normal;font-style:normal;color:#111;transform:scaleX(0.9500);transform-origin:0 0;-webkit-text-stroke:0.06px #111;">84,176</div>
<div style="position:absolute;left:695.42px;top:618.86px;line-height:0;white-space:nowrap;font-family:'Liberation Sans';font-size:7.50px;font-weight:normal;font-style:normal;color:#111;transform:scaleX(0.9500);transform-origin:0 0;-webkit-text-stroke:0.06px #111;">86%</div>
<div style="position:absolute;left:212.8px;top:238px;width:10.5px;height:10px;background:#fff;border-radius:0.5px"></div><div style="position:absolute;left:216.60000000000002px;top:239.0px;width:2.9px;height:1.8px;background:#898c87;border-radius:1px"></div><div style="position:absolute;left:216.4px;top:242px;width:2.8px;height:6px;background:#898c87"></div><div style="position:absolute;left:215.8px;top:246px;width:4.2px;height:2px;background:#898c87"></div>
<div style="position:absolute;left:212.8px;top:306.3px;width:10.5px;height:10px;background:#fff;border-radius:0.5px"></div><div style="position:absolute;left:216.60000000000002px;top:307.3px;width:2.9px;height:1.8px;background:#898c87;border-radius:1px"></div><div style="position:absolute;left:216.4px;top:310.3px;width:2.8px;height:6px;background:#898c87"></div><div style="position:absolute;left:215.8px;top:314.3px;width:4.2px;height:2px;background:#898c87"></div>
</body></html>
